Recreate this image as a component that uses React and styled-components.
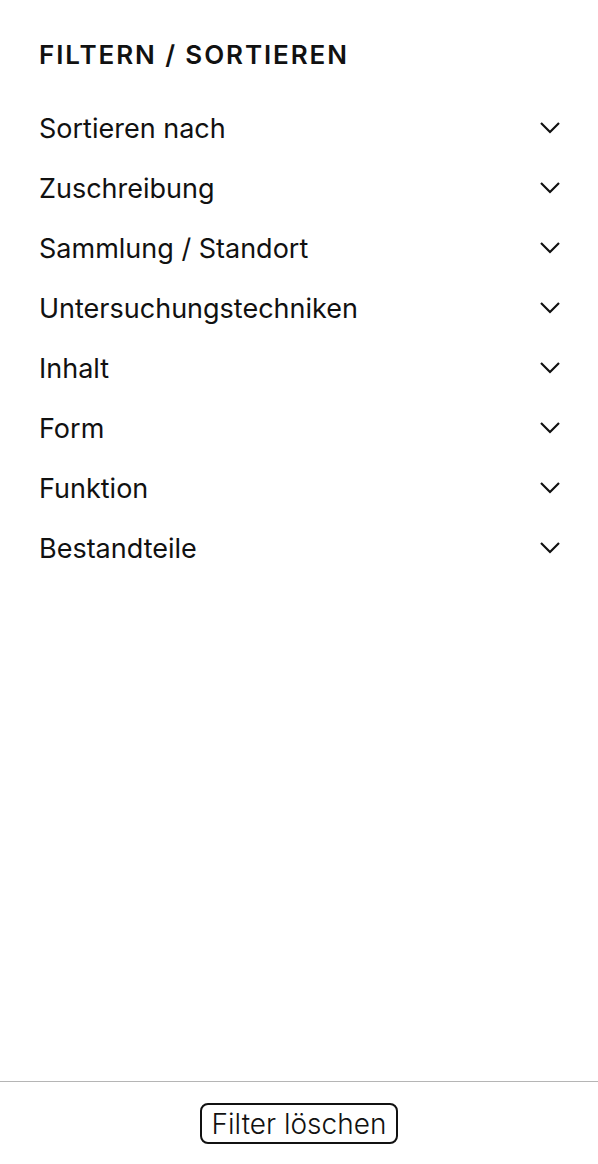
import styled, { createGlobalStyle } from "styled-components";

const GlobalStyle = createGlobalStyle`
  html, body {
    margin: 0;
    padding: 0;
    background: #fff;
  }
  body {
    font-family: Inter, "Noto Sans", sans-serif;
    color: #111;
  }
`;

const filters = [
  "Sortieren nach",
  "Zuschreibung",
  "Sammlung / Standort",
  "Untersuchungstechniken",
  "Inhalt",
  "Form",
  "Funktion",
  "Bestandteile",
];

const Chevron = () => (
  <svg width="22" height="14" viewBox="0 0 22 14" fill="none">
    <path d="M2 2 L11 11 L20 2" stroke="#111" strokeWidth="2.2" />
  </svg>
);

const App = () => {
  return (
    <>
      <GlobalStyle />
      <Panel>
        <Content>
          <Title>FILTERN / SORTIEREN</Title>
          <List>
            {filters.map((label) => (
              <Row key={label}>
                <Label>{label}</Label>
                <Chevron />
              </Row>
            ))}
          </List>
        </Content>
        <Footer>
          <ClearButton type="button">Filter löschen</ClearButton>
        </Footer>
      </Panel>
    </>
  );
};

export default App;

const Panel = styled.div`
  display: flex;
  flex-direction: column;
  height: 1164px;
  width: 598px;
`;

const Content = styled.div`
  flex: 1;
  padding: 38px 37px 0 39px;
`;

const Title = styled.h2`
  margin: 0 0 26px;
  font-size: 26px;
  font-weight: 600;
  letter-spacing: 1.9px;
  line-height: 34px;
`;

const List = styled.div`
  display: flex;
  flex-direction: column;
`;

const Row = styled.div`
  display: flex;
  align-items: center;
  justify-content: space-between;
  height: 60px;
  cursor: pointer;
`;

const Label = styled.span`
  font-size: 27px;
  font-weight: 400;
`;

const Footer = styled.div`
  display: flex;
  justify-content: center;
  border-top: 1px solid #b5b5b5;
  padding: 21px 0 20px;
`;

const ClearButton = styled.button`
  height: 41px;
  padding: 0 10px;
  border: 2px solid #111;
  border-radius: 8px;
  background: #fff;
  font-family: Inter, "Noto Sans", sans-serif;
  font-size: 28px;
  font-weight: 300;
  color: #111;
  line-height: 1;
  cursor: pointer;
`;
